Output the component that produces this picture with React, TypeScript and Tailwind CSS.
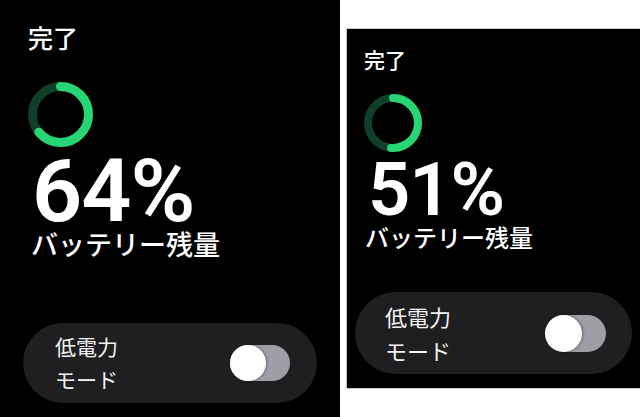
const jp = "font-['Noto_Sans_CJK_JP',sans-serif]";
const num = "font-['Roboto','Inter',sans-serif]";

function Ring({ size, stroke, pct }: { size: number; stroke: number; pct: number }) {
  const r = (size - stroke) / 2;
  const c = 2 * Math.PI * r;
  return (
    <svg width={size} height={size} viewBox={`0 0 ${size} ${size}`} className="-rotate-90">
      <circle cx={size / 2} cy={size / 2} r={r} fill="none" stroke="#0f3f28" strokeWidth={stroke} />
      <circle
        cx={size / 2}
        cy={size / 2}
        r={r}
        fill="none"
        stroke="#27d574"
        strokeWidth={stroke}
        strokeLinecap="round"
        strokeDasharray={`${c * pct} ${c}`}
      />
    </svg>
  );
}

function Toggle({ className, knob }: { className: string; knob: string }) {
  return (
    <div className={`rounded-full bg-[#9e9fa6] flex items-center ${className}`}>
      <div className={`rounded-full bg-white shadow-[1px_0_3px_rgba(0,0,0,0.35)] ${knob}`} />
    </div>
  );
}

export default function App() {
  return (
    <div className="flex w-[640px] h-[417px] bg-white overflow-hidden">
      {/* left watch */}
      <div className="w-[340px] h-full bg-black flex flex-col pl-[23px] pt-[25px] text-white shrink-0">
        <div className={`${jp} ml-[5px] text-[25px] leading-none font-medium`}>完了</div>
        <div className="ml-[5px] mt-[32px]">
          <Ring size={65} stroke={9} pct={0.64} />
        </div>
        <div className={`${num} ml-[9px] mt-[5px] text-[88px] leading-[78px] font-semibold tracking-[-1px]`}>64%</div>
        <div className={`${jp} ml-[8px] text-[27px] leading-none font-medium`}>バッテリー残量</div>
        <div className="mt-[66px] w-[294px] h-[80px] rounded-full bg-[#1f1f21] flex items-center justify-between pl-[32px] pr-[27px]">
          <div className={`${jp} text-[21px] leading-[33px] text-[#f2f2f2]`}>
            <div>低電力</div>
            <div>モード</div>
          </div>
          <Toggle className="w-[60px] h-[36px]" knob="w-[36px] h-[36px]" />
        </div>
      </div>

      {/* right watch */}
      <div className="ml-[6px] mt-[28px] h-[361px] flex-1 border-l border-t border-b border-[#c9c9c9] bg-black">
        <div className="h-full flex flex-col pl-[8px] pt-[20px] text-white">
          <div className={`${jp} ml-[9px] text-[21px] leading-none font-medium`}>完了</div>
          <div className="ml-[9px] mt-[24px]">
            <Ring size={58} stroke={8} pct={0.51} />
          </div>
          <div className={`${num} ml-[13px] mt-[5px] text-[74px] leading-[66px] font-semibold tracking-[-1px]`}>51%</div>
          <div className={`${jp} ml-[10px] mt-[2px] text-[24px] leading-none font-medium`}>バッテリー残量</div>
          <div className="mt-[43px] w-[277px] h-[82px] rounded-full bg-[#1f1f21] flex items-center justify-between pl-[30px] pr-[26px]">
            <div className={`${jp} text-[22px] leading-[34px] text-[#f2f2f2]`}>
              <div>低電力</div>
              <div>モード</div>
            </div>
            <Toggle className="w-[61px] h-[37px]" knob="w-[37px] h-[37px]" />
          </div>
        </div>
      </div>
    </div>
  );
}
